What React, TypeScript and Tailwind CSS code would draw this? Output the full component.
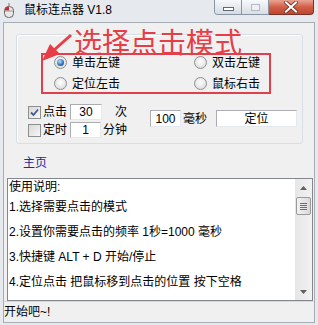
import React from 'react';

const ui = "font-['Liberation_Sans','Noto_Sans_CJK_SC',sans-serif]";

const Radio = ({ checked, label }: { checked?: boolean; label: string }) => (
  <div className="flex h-[21px] items-center gap-[5px]">
    <span className="flex h-[13px] w-[13px] items-center justify-center rounded-full border border-[#8e8f8f] bg-[radial-gradient(circle_at_50%_40%,#ffffff,#d4d4d4)]">
      {checked && (
        <span className="h-[7px] w-[7px] rounded-full bg-[radial-gradient(circle_at_40%_35%,#b9e0ff,#2a6fb5_60%,#0d3f78)]" />
      )}
    </span>
    <span className="text-[12px] leading-[14px] text-black">{label}</span>
  </div>
);

const Check = ({ checked }: { checked?: boolean }) => (
  <span className="flex h-[13px] w-[13px] items-center justify-center border border-[#8e8f8f] bg-gradient-to-br from-[#d8d8d8] to-[#f7f7f7]">
    {checked && (
      <svg width="9" height="9" viewBox="0 0 9 9">
        <path d="M1 4.5 L3.5 7 L8 1.5" fill="none" stroke="#3d5a96" strokeWidth="1.8" />
      </svg>
    )}
  </span>
);

const Edit = ({ value, w, h }: { value: string; w: string; h: string }) => (
  <div className={`${w} ${h} flex items-center justify-center border border-[#abadb3] border-r-[#e3e9ef] border-b-[#e3e9ef] bg-white text-[12px] leading-[14px]`}>
    {value}
  </div>
);

export default function App() {
  return (
    <div className={`relative flex h-[325px] w-[318px] flex-col overflow-hidden bg-[#e6eaee] ${ui}`}>
      {/* title bar */}
      <div className="flex h-[22px] items-start">
        <svg className="ml-[4px] mt-[3px]" width="10" height="15" viewBox="0 0 10 15">
          <path d="M5 0 V3" stroke="#777" strokeWidth="1" />
          <rect x="0.5" y="3.5" width="9" height="11" rx="4" fill="#e8e8e8" stroke="#666" />
          <path d="M1 7.5 V6 a4 3 0 0 1 4 -2.5 V7.5 Z" fill="#d8232a" />
          <path d="M1 8 H9" stroke="#888" strokeWidth="0.8" />
        </svg>
        <span className="ml-[10px] mt-[3px] text-[12px] leading-[14px] text-black">鼠标连点器 V1.8</span>
        <div className="ml-auto mr-[4px] flex h-[15px]">
          <div className="flex rounded-bl-[4px] border border-t-0 border-[#8b94a1] overflow-hidden">
            <div className="flex w-[26px] items-end justify-center bg-gradient-to-b from-[#f7f9fb] to-[#d5dbe3] pb-[3px]">
              <span className="h-[4px] w-[11px] border border-[#5f6874] bg-white" />
            </div>
            <div className="flex w-[27px] items-center justify-center border-l border-[#8b94a1] bg-gradient-to-b from-[#f7f9fb] to-[#d9dee5]">
              <span className="h-[7px] w-[9px] border border-[#b3bac4] bg-[#eef1f4]" />
            </div>
          </div>
          <div className="flex w-[45px] items-center justify-center rounded-br-[4px] border border-l-0 border-t-0 border-[#7c3127] bg-gradient-to-b from-[#e9a393] via-[#d15f48] to-[#c2452f]">
            <svg width="14" height="12" viewBox="0 0 14 12">
              <path d="M2 1.5 L12 10.5 M12 1.5 L2 10.5" stroke="#5a1c14" strokeWidth="3.6" strokeLinecap="square" />
              <path d="M2 1.5 L12 10.5 M12 1.5 L2 10.5" stroke="#ffffff" strokeWidth="2.2" strokeLinecap="square" />
            </svg>
          </div>
        </div>
      </div>

      {/* client area */}
      <div className="mx-[3px] mb-[2px] flex flex-1 flex-col border border-[#a7adb5] bg-[#f0f0f0] text-black">
        {/* group box */}
        <div className="ml-[12px] mr-[11px] mt-[11px] h-[110px] rounded-[3px] border border-[#d5dfe5] shadow-[inset_1px_1px_0_#ffffff]">
          <div className="ml-[37px] mt-[17px] grid grid-cols-[140px_1fr]">
            <Radio checked label="单击左键" />
            <Radio label="双击左键" />
            <Radio label="定位左击" />
            <Radio label="鼠标右击" />
          </div>
          <div className="mt-[10px] flex items-start">
            <div className="ml-[11px] flex flex-col gap-[2px]">
              <div className="flex h-[16px] items-center">
                <Check checked />
                <span className="ml-[2px] text-[12px] leading-[14px]">点击</span>
                <div className="ml-[3px]"><Edit value="30" w="w-[32px]" h="h-[16px]" /></div>
                <span className="ml-[13px] text-[12px] leading-[14px]">次</span>
              </div>
              <div className="flex h-[16px] items-center">
                <Check />
                <span className="ml-[2px] text-[12px] leading-[14px]">定时</span>
                <div className="ml-[3px]"><Edit value="1" w="w-[31px]" h="h-[16px]" /></div>
                <span className="ml-[2px] text-[12px] leading-[14px]">分钟</span>
              </div>
            </div>
            <div className="ml-[23px] mt-[6px] flex items-center">
              <Edit value="100" w="w-[31px]" h="h-[17px]" />
              <span className="ml-[2px] text-[12px] leading-[14px]">毫秒</span>
              <div className="ml-[9px]"><Edit value="定位" w="w-[81px]" h="h-[17px]" /></div>
            </div>
          </div>
        </div>

        <div className="ml-[19px] mt-[12px] h-[14px] text-[12px] leading-[14px] text-[#1f2a9c]">主页</div>

        {/* instructions */}
        <div className="ml-[3px] mr-[1px] mt-[8px] flex h-[123px] border border-[#828790] bg-white">
          <div className="flex-1 pl-[1px] text-[12px] text-black">
            <div className="h-[16px] leading-[16px]">使用说明:</div>
            <div className="leading-[25px]">1.选择需要点击的模式</div>
            <div className="leading-[25px]">2.设置你需要点击的频率 1秒=1000 毫秒</div>
            <div className="leading-[25px]">3.快捷键 ALT + D 开始/停止</div>
            <div className="leading-[25px]">4.定位点击 把鼠标移到点击的位置 按下空格</div>
          </div>
          <div className="flex w-[17px] flex-col bg-gradient-to-r from-[#e6e6e6] to-[#f2f2f2]">
            <div className="flex h-[17px] items-center justify-center">
              <svg width="7" height="4" viewBox="0 0 7 4"><path d="M0 4 L3.5 0 L7 4 Z" fill="#606060" /></svg>
            </div>
            <div className="mx-[1px] mt-[1px] flex h-[18px] flex-col items-center justify-center gap-[1px] rounded-[2px] border border-[#9a9a9a] bg-gradient-to-r from-[#f2f2f2] to-[#d9d9d9]">
              <span className="h-px w-[7px] bg-[#707070]" />
              <span className="h-px w-[7px] bg-[#707070]" />
              <span className="h-px w-[7px] bg-[#707070]" />
              <span className="h-px w-[7px] bg-[#707070]" />
            </div>
            <div className="flex-1" />
            <div className="flex h-[17px] items-center justify-center">
              <svg width="7" height="4" viewBox="0 0 7 4"><path d="M0 0 L3.5 4 L7 0 Z" fill="#606060" /></svg>
            </div>
          </div>
        </div>

        {/* status bar */}
        <div className="flex h-[21px] items-center border-t border-[#d9d9d9] bg-[#f0f0f0] text-[12px] leading-[14px]">
          开始吧~!
        </div>
      </div>

      {/* red annotation overlay */}
      <div className="pointer-events-none absolute left-[74px] top-[28px] text-[28px] leading-[26px] text-[#e63d47] font-['Noto_Sans_CJK_SC',sans-serif]">
        选择点击模式
      </div>
      <div className="pointer-events-none absolute left-[41px] top-[53px] h-[41px] w-[230px] border-2 border-[#e0404c]" />
      <svg className="pointer-events-none absolute left-0 top-0" width="318" height="100" viewBox="0 0 318 100">
        <path d="M71 35 L53 51" stroke="#e63d47" strokeWidth="3" />
        <path d="M42 61 L50 44 L60 54 Z" fill="#e63d47" />
      </svg>
    </div>
  );
}
